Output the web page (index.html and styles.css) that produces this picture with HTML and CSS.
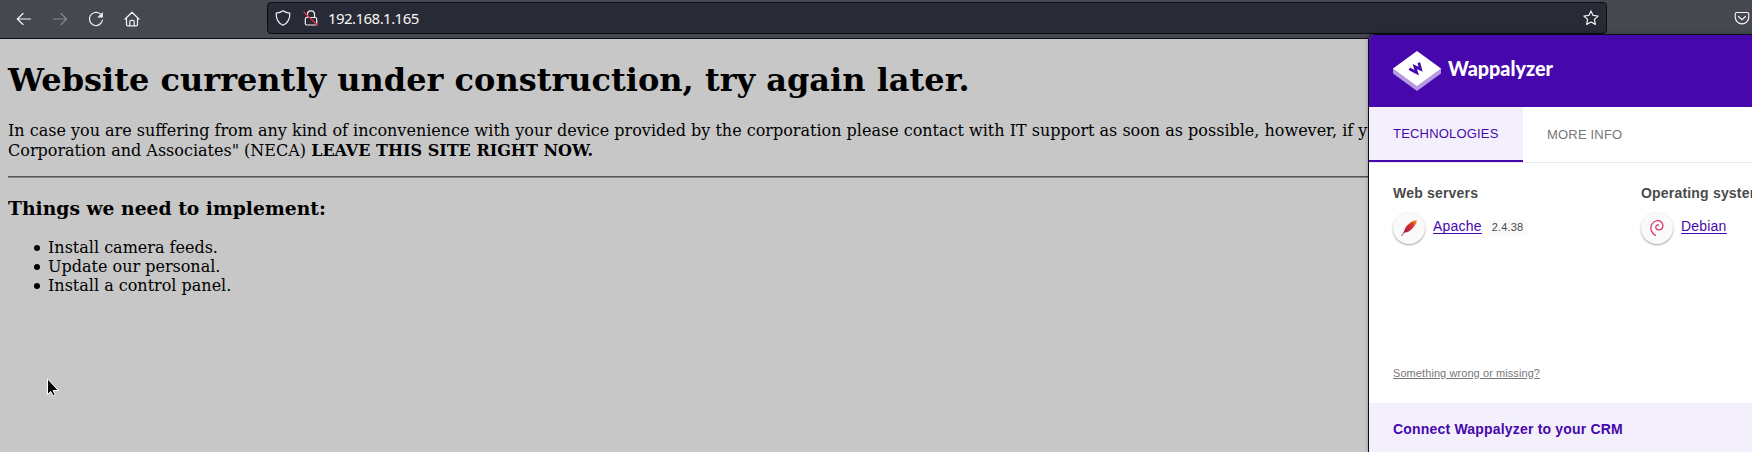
FILE: index.html
```html
<!DOCTYPE html>
<html lang="en">
<head>
<meta charset="utf-8">
<title>192.168.1.165</title>
<link rel="stylesheet" href="styles.css">
</head>
<body>
<header class="toolbar">
  <nav class="nav-buttons">
    <svg class="icon" viewBox="0 0 16 16"><path d="M14.500 8H1.500M7 2.500 1.300 8 7 13.500"/></svg>
    <svg class="icon disabled" viewBox="0 0 16 16"><path d="M1.500 8h13M9 2.500 14.700 8 9 13.500"/></svg>
    <svg class="icon" viewBox="0 0 16 16"><path d="M12.200 2.900A6.600 6.600 0 1 0 14.500 9"/><path class="solid" d="M14.800 1v5.500H9.300z"/></svg>
    <svg class="icon" viewBox="0 0 16 16"><path d="M.9 8.200 8 1.200l7.100 7M2.500 6.800v6.700q0 1.300 1.300 1.300h8.400q1.300 0 1.300-1.300V6.800M5.800 14.500v-3.700q0-1.500 1.500-1.500h1.400q1.500 0 1.500 1.500v3.700"/></svg>
  </nav>
  <div class="address">
    <svg class="icon" viewBox="0 0 16 16"><path d="M8 .8Q10.800 3 14.800 3.200C15 8.500 12.500 13.200 8 15.300 3.500 13.200 1 8.500 1.200 3.200Q5.200 3 8 .8z"/></svg>
    <svg class="icon lock" viewBox="0 0 16 16"><path d="M4.500 7.500V4.300a3.500 3.500 0 0 1 7 0v3.200M3.800 7.500h8.400q1.500 0 1.500 1.500v4.500q0 1.500-1.500 1.500H3.800q-1.500 0-1.500-1.500V9q0-1.500 1.500-1.500z"/><path class="strike" d="M1 2.300 14.500 15.300"/></svg>
    <span class="url">192.168.1.165</span>
    <svg class="icon" viewBox="0 0 16 16"><path d="M8 .9l2.100 4.500 5 .6-3.700 3.400 1 5L8 12l-4.400 2.400 1-5L.9 6l5-.6z"/></svg>
  </div>
  <svg class="icon pocket" viewBox="0 0 16 16"><path d="M3 2.500h10q1.800 0 1.800 1.800V7a6.800 6.800 0 0 1-13.600 0V4.300Q1.200 2.500 3 2.500zM4.500 6.500 8 9.700l3.500-3.200"/></svg>
</header>

<main class="page">
  <h1>Website currently under construction, try again later.</h1>
  <p>In case you are suffering from any kind of inconvenience with your device provided by the corporation please contact with IT support as soon as possible, however, if y<br>Corporation and Associates" (NECA) <b>LEAVE THIS SITE RIGHT NOW.</b></p>
  <hr>
  <h3>Things we need to implement:</h3>
  <ul>
    <li>Install camera feeds.</li>
    <li>Update our personal.</li>
    <li>Install a control panel.</li>
  </ul>
</main>

<aside class="popup">
  <div class="brand">
    <svg class="brand-mark" viewBox="0 0 48 41"><path fill="#b79be0" d="M0 22.500v-5h48v5L24 40z"/><path fill="#fff" d="M24 0l24 17.500L24 35 0 17.500z"/><path class="mark-letter" d="M16.300 17.700 23.700 21.700 21.800 15.500 27.600 18.200 25.800 11.700"/></svg>
    <svg class="wordmark" viewBox="0 0 108 28"><text x="0" y="21" textLength="105" lengthAdjust="spacingAndGlyphs">Wappalyzer</text></svg>
  </div>
  <div class="tabs">
    <div class="tab active">TECHNOLOGIES</div>
    <div class="tab">MORE INFO</div>
  </div>
  <div class="technologies">
    <section class="category">
      <h4>Web servers</h4>
      <div class="tech">
        <span class="badge"><svg viewBox="0 0 16 16"><defs><linearGradient id="feather" x1="1" y1="0" x2="0" y2="1"><stop offset="0" stop-color="#f69923"/><stop offset=".35" stop-color="#d9382f"/><stop offset=".65" stop-color="#be2145"/><stop offset="1" stop-color="#6d3b88"/></linearGradient></defs><path fill="url(#feather)" d="M15.800.2C12.500-.2 7 3.300 4.200 8.200L2.500 12.200.2 15.700l.7.200 2.300-3.200 3.800-.7C11 9.500 15.800 4.500 15.800.2z"/><path d="M3 12.500 12.500 3" stroke="#8f1e50" stroke-width=".6"/></svg></span>
        <a>Apache</a><span class="version">2.4.38</span>
      </div>
    </section>
    <section class="category">
      <h4>Operating systems</h4>
      <div class="tech">
        <span class="badge"><svg viewBox="0 0 16 16"><path fill="none" stroke="#d7286a" stroke-width="1.200" stroke-linecap="round" d="M6.500 15.400C2.300 13 .7 8.500 2.800 4.300 5 .2 10.500-.6 13 2.800c2 3 .5 7-2.800 7.200-2.700.2-4.300-2.600-2.800-4.300.6-.7 1.400-.9 2.200-.8"/></svg></span>
        <a>Debian</a>
      </div>
    </section>
  </div>
  <div class="feedback"><a>Something wrong or missing?</a></div>
  <footer class="crm">Connect Wappalyzer to your CRM</footer>
</aside>

<svg class="cursor" viewBox="0 0 12 19"><path fill="#000" stroke="#fff" d="M.5.800V16.500l3.300-3 2.300 4.300 2-1-2-4.300h5.300z"/></svg>
</body>
</html>
```
FILE: styles.css
```css
* { box-sizing: border-box; }
html, body { height: 100%; }
body {
  margin: 0;
  overflow: hidden;
  position: relative;
  background: #c7c7c7;
  color: #000;
  font-family: "DejaVu Serif", serif;
  font-size: 16px;
}
.toolbar {
  display: flex;
  align-items: flex-start;
  height: 39px;
  padding-top: 2px;
  background: #45484f;
  border-bottom: 1px solid #0c0d12;
}
.nav-buttons { display: flex; gap: 20px; width: 267px; padding: 9px 0 0 16px; }
.icon {
  flex: none;
  width: 16px;
  height: 16px;
  fill: none;
  stroke: #f2f2f3;
  stroke-width: 1.2;
  stroke-linecap: round;
  stroke-linejoin: round;
}
.icon .solid { fill: #f2f2f3; stroke: none; }
.icon .strike { stroke: #e22850; stroke-width: 1.4; }
.icon.disabled { stroke: #84868b; }
.address {
  display: flex;
  align-items: center;
  width: 1340px;
  height: 32px;
  padding: 0 7px;
  background: #282a36;
  border: 1px solid #0c0d12;
  border-radius: 4px;
}
.lock { margin-left: 12px; }
.url {
  flex: 1;
  margin-left: 9px;
  color: #f8f8f2;
  font: 15px "Noto Sans", sans-serif;
  letter-spacing: -.55px;
}
.pocket { margin: 8px 0 0 127px; }

.page { display: flow-root; padding: 0 8px; }
.page h1 { font-size: 32px; margin: 22px 0 22px; line-height: 38px; white-space: nowrap; }
.page p { margin: 0 0 15px; white-space: nowrap; line-height: 20px; }
.page hr { margin: 0 0 8px; height: 2px; border: 0; border-top: 1px solid #555; background: #858585; }
.page h3 { font-size: 18.72px; line-height: 22px; margin: 19px 0; letter-spacing: .02px; }
.page ul { margin: 0; padding-left: 26px; line-height: 19px; list-style: none; }
.page li { display: flex; align-items: center; gap: 8px; }
.page li::before { content: ""; width: 6px; height: 6px; margin-top: 1px; border-radius: 50%; background: #000; }

.popup {
  position: absolute;
  left: 1368px;
  top: 34px;
  width: 384px;
  height: 418px;
  overflow: hidden;
  background: #fff;
  border: solid #0c0d12;
  border-width: 1px 0 0 1px;
  border-top-left-radius: 6px;
  box-shadow: 0 0 4px rgba(0, 0, 0, .25);
  color: #4a4a4a;
  font-family: "Liberation Sans", Arial, sans-serif;
  font-size: 14px;
  letter-spacing: .19px;
}
.brand { display: flex; height: 72px; padding: 16px 24px; background: #4608ad; }
.brand-mark { width: 48px; height: 41px; }
.mark-letter { fill: none; stroke: #4608ad; stroke-width: 2.7; }
.wordmark { width: 108px; height: 28px; margin: 4px 0 0 7px; }
.wordmark text { fill: #fff; font: 900 20px Lato, sans-serif; letter-spacing: 0; }
.tabs { display: flex; height: 56px; border-bottom: 1px solid #e8e8e8; }
.tab { height: 55px; padding: 1px 24px 0; line-height: 54px; font-size: 13px; color: #777; }
.tab.active { width: 154px; padding-top: 0; line-height: 53px; background: #f4f0fb; color: #4608ad; border-bottom: 2px solid #4608ad; }
.technologies { display: flex; height: 187px; padding: 21px 24px 0; }
.category { flex: none; width: 248px; }
.category h4 { margin: 0; font-size: 14px; line-height: 18px; white-space: nowrap; }
.tech { display: flex; align-items: flex-start; margin-top: 9px; }
.badge {
  display: grid;
  place-items: center;
  width: 32px;
  height: 32px;
  margin-top: 1px;
  border-radius: 50%;
  background: #fafafa;
  box-shadow: 0 1px 2px rgba(0, 0, 0, .38);
}
.badge svg { width: 16px; height: 16px; }
.tech a { margin: 8px 0 0 8px; color: #4608ad; border-bottom: 1px solid #4608ad; line-height: 14px; }
.version { margin: 9px 0 0 5px; padding: 0 5px; height: 16px; line-height: 15px; font-size: 11px; background: #fafafa; border-radius: 4px; }
.feedback { height: 53px; padding: 15px 24px; font-size: 11px; line-height: 16px; color: #777; letter-spacing: .08px; }
.feedback a { text-decoration: underline; }
.crm { height: 49px; padding: 0 24px; line-height: 52px; background: #f4f0fb; color: #4608ad; font-weight: bold; }
.cursor { position: absolute; left: 47px; top: 378px; width: 12px; height: 19px; }
```
